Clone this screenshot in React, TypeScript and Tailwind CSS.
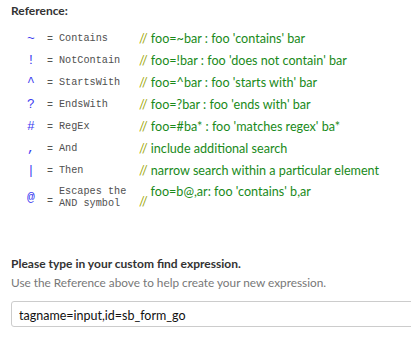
import React from 'react';

const rows = [
  { sym: '~', name: 'Contains', note: "foo=~bar : foo 'contains' bar" },
  { sym: '!', name: 'NotContain', note: "foo=!bar : foo 'does not contain' bar" },
  { sym: '^', name: 'StartsWith', note: "foo=^bar : foo 'starts with' bar" },
  { sym: '?', name: 'EndsWith', note: "foo=?bar : foo 'ends with' bar" },
  { sym: '#', name: 'RegEx', note: "foo=#ba* : foo 'matches regex' ba*" },
  { sym: ',', name: 'And', note: 'include additional search' },
  { sym: '|', name: 'Then', note: 'narrow search within a particular element' },
];

const sans = "font-['Segoe_UI','Lato',sans-serif]";
const mono = "font-['Liberation_Mono',monospace]";

const App = () => {
  return (
    <div className={`w-[411px] h-[346px] bg-white overflow-hidden text-[12px] ${sans}`}>
      <div className="pt-[2px] pl-[11px]">
        <h3 className="font-bold text-[#333] text-[12px] leading-[18px]">Reference:</h3>
      </div>

      <div className="mt-[8px] pl-[21px]">
        {rows.map((r) => (
          <div key={r.name} className="flex items-center h-[22px]">
            <span className={`w-[20px] text-center text-[#3b3bf0] ${mono} text-[13px]`}>{r.sym}</span>
            <span className={`w-[18px] text-center text-[#555] ${mono} text-[10px]`}>=</span>
            <span className={`w-[80px] text-[#4f4f4f] ${mono} text-[10.2px]`}>{r.name}</span>
            <span className="text-[#1a8a1a] whitespace-nowrap text-[12.6px]">
              <span className="text-[#9aa500]">//</span> {r.note}
            </span>
          </div>
        ))}
        <div className="flex items-center h-[30px] mt-[1px]">
          <span className={`w-[20px] text-center text-[#3b3bf0] ${mono} text-[13px]`}>@</span>
          <span className={`w-[18px] text-center text-[#555] ${mono} text-[10px] mt-[6px]`}>=</span>
          <span className={`w-[80px] text-[#4f4f4f] ${mono} text-[10.2px] leading-[12px]`}>
            Escapes the
            <br />
            AND symbol
          </span>
          <span className="text-[#1a8a1a] whitespace-nowrap flex items-start text-[12.6px]">
            <span className="text-[#9aa500] mt-[8px] mr-[3px]">//</span>
            <span className="-mt-[2px]">foo=b@,ar: foo 'contains' b,ar</span>
          </span>
        </div>
      </div>

      <div className="mt-[42px] pl-[11px]">
        <p className="font-bold text-[#333] leading-[18px]">Please type in your custom find expression.</p>
        <p className="text-[#777] leading-[18px] mt-[1px] text-[11.8px]">Use the Reference above to help create your new expression.</p>
      </div>

      <div className="mt-[9px] pl-[11px]">
        <input
          type="text"
          defaultValue="tagname=input,id=sb_form_go"
          className={`w-[420px] h-[26px] px-[7px] pt-[2px] border border-[#ccc] rounded-[3px] text-[12.5px] text-[#111] ${sans} outline-none`}
        />
      </div>
    </div>
  );
};

export default App;
